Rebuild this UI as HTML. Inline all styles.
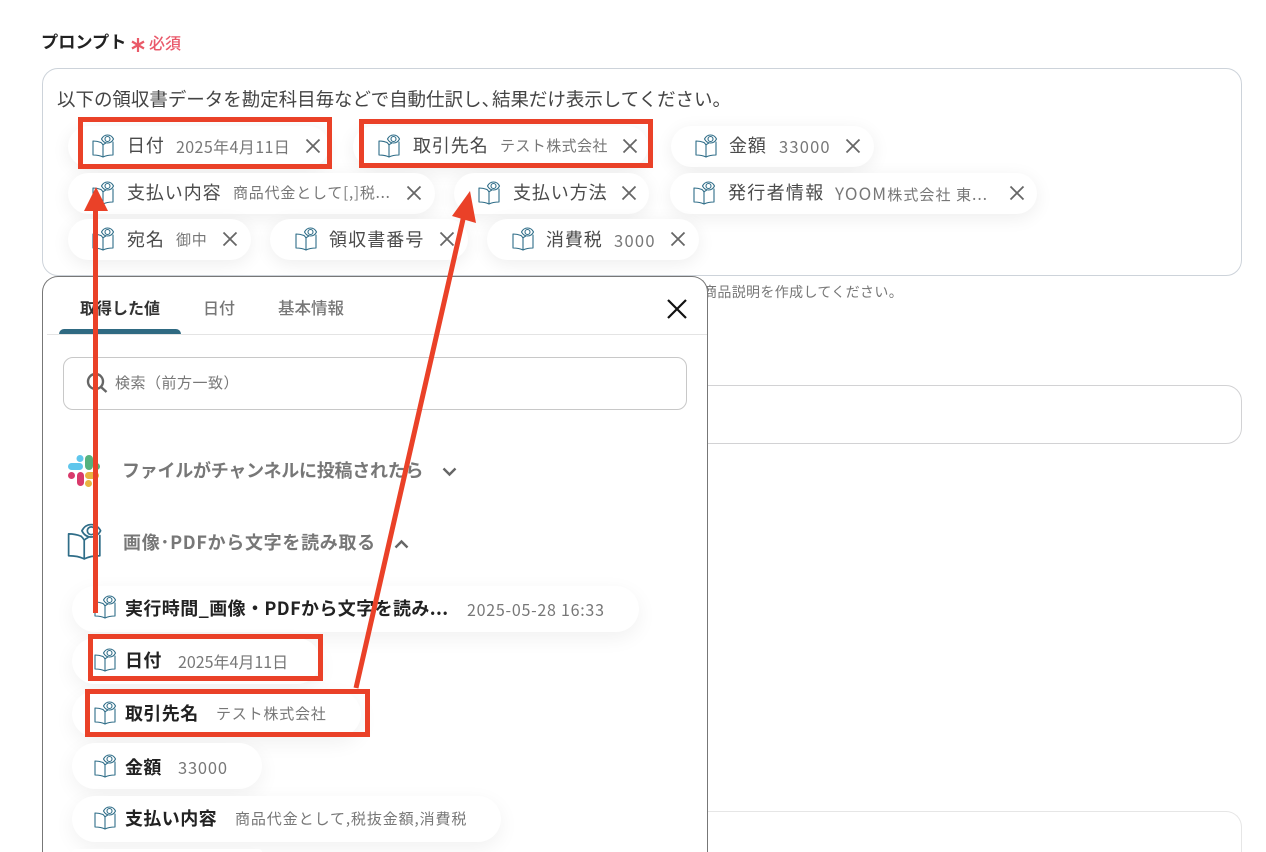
<!DOCTYPE html>
<html lang="ja"><head><meta charset="utf-8"><title>プロンプト</title>
<style>
html,body{margin:0;padding:0;background:#fff;width:1266px;height:852px;overflow:hidden}
#w{width:1266px;height:852px;position:relative;overflow:hidden;font-family:"Noto Sans CJK JP","Liberation Sans",sans-serif;color:#333}
.a{position:absolute;white-space:nowrap}
.t{position:absolute;white-space:nowrap;line-height:24px;height:24px}
.box{position:absolute;box-sizing:border-box;background:#fff}
.chip{position:absolute;height:41px;background:#fff;border-radius:21px;box-shadow:0 4px 18px rgba(0,0,0,.07)}
.chip2{position:absolute;height:46px;left:72px;background:#fff;border-radius:23px;box-shadow:0 6px 20px rgba(0,0,0,.06)}
.l{font-size:18px;color:#4a4a4a;letter-spacing:.9px}
.v{font-size:15px;color:#777;letter-spacing:.8px}
.b{font-size:18px;font-weight:700;color:#222;letter-spacing:.4px}
.i{position:absolute;width:23px;height:25px}
.x{position:absolute;width:16px;height:16px}
.red{position:absolute;box-sizing:border-box;border:5px solid #ea4128}
svg{overflow:visible}
</style></head><body><div id="w">
<svg width="0" height="0" style="position:absolute">
<symbol id="bk" viewBox="0 0 23 25"><g fill="none" stroke="#2f6d88" stroke-width="1.1" stroke-linejoin="round" stroke-linecap="round"><path d="M9 8.500C6.500 7.500 4 7 1 7V21C4.500 21 8 21.500 11 23C14 21.500 17.500 21 21 21V8"/><path d="M11 11V23M11 11C10.500 10 9.800 9.200 9 8.500M11 11C11.800 10.200 12.500 9.800 13.500 9.300"/><path d="M9.500 5C10.800 2.500 13 1 15.500 1C18 1 20.300 2.500 21.500 5C20.300 7.500 18 9 15.500 9C13 9 10.800 7.500 9.500 5Z"/><circle cx="15.500" cy="5" r="2.500"/></g></symbol>
<symbol id="xx" viewBox="0 0 16 16"><path d="M1.500 1.500L14.500 14.500M14.500 1.500L1.500 14.500" stroke="#666" stroke-width="1.800" fill="none"/></symbol>
</svg>

<div class="t" style="left:41px;top:29px;font-size:17.200px;font-weight:700;color:#222">プロンプト</div>
<svg class="a" style="left:131px;top:38px" width="14" height="14" fill="none" stroke="#ea5a68" stroke-width="2.200"><path d="M7 0V14M1 3.500L13 10.500M13 3.500L1 10.500"/></svg>
<div class="t" style="left:149px;top:30px;font-size:16px;font-weight:500;color:#e9596a">必須</div>

<div class="box" style="left:42px;top:68px;width:1200px;height:208px;border:1px solid #cdd3da;border-radius:16px"></div>
<div class="t" style="left:57px;top:87px;font-size:18.500px;color:#444;letter-spacing:-.03px">以下の領収書データを勘定科目毎などで自動仕訳し<span style="letter-spacing:-8px">、</span>結果だけ表示してください。</div>

<div class="chip" style="left:68px;top:126px;width:261px"></div>
<div class="chip" style="left:353px;top:126px;width:295px"></div>
<div class="chip" style="left:671px;top:126px;width:203px"></div>
<div class="chip" style="left:68px;top:173px;width:367px"></div>
<div class="chip" style="left:454px;top:173px;width:195px"></div>
<div class="chip" style="left:670px;top:173px;width:367px"></div>
<div class="chip" style="left:68px;top:219px;width:183px"></div>
<div class="chip" style="left:270px;top:219px;width:198px"></div>
<div class="chip" style="left:487px;top:219px;width:212px"></div>

<svg class="i" style="left:92px;top:134px"><use href="#bk"/></svg><div class="t l" style="left:127px;top:133px">日付</div><div class="t v" style="left:176px;top:134px;font-size:16px;letter-spacing:.4px">2025年4月11日</div><svg class="x" style="left:305px;top:138px"><use href="#xx"/></svg>
<svg class="i" style="left:378px;top:134px"><use href="#bk"/></svg><div class="t l" style="left:413px;top:133px">取引先名</div><div class="t v" style="left:500px;top:134px;letter-spacing:.4px">テスト株式会社</div><svg class="x" style="left:622px;top:138px"><use href="#xx"/></svg>
<svg class="i" style="left:695px;top:134px"><use href="#bk"/></svg><div class="t l" style="left:729px;top:133px">金額</div><div class="t v" style="left:779px;top:134px;font-size:16.500px;letter-spacing:1.200px">33000</div><svg class="x" style="left:845px;top:138px"><use href="#xx"/></svg>

<svg class="i" style="left:92px;top:181px"><use href="#bk"/></svg><div class="t l" style="left:127px;top:180px">支払い内容</div><div class="t v" style="left:233px;top:181px">商品代金として[,]税...</div><svg class="x" style="left:406px;top:185px"><use href="#xx"/></svg>
<svg class="i" style="left:478px;top:181px"><use href="#bk"/></svg><div class="t l" style="left:513px;top:180px">支払い方法</div><svg class="x" style="left:621px;top:185px"><use href="#xx"/></svg>
<svg class="i" style="left:693px;top:181px"><use href="#bk"/></svg><div class="t l" style="left:728px;top:180px;letter-spacing:1.300px">発行者情報</div><div class="t v" style="left:835px;top:181px;letter-spacing:1.100px"><span style="font-size:17px">YOOM</span>株式会社 東...</div><svg class="x" style="left:1009px;top:185px"><use href="#xx"/></svg>

<svg class="i" style="left:92px;top:227px"><use href="#bk"/></svg><div class="t l" style="left:127px;top:227px">宛名</div><div class="t v" style="left:176px;top:228px">御中</div><svg class="x" style="left:222px;top:231px"><use href="#xx"/></svg>
<svg class="i" style="left:295px;top:227px"><use href="#bk"/></svg><div class="t l" style="left:329px;top:227px;letter-spacing:1.100px">領収書番号</div><svg class="x" style="left:439px;top:231px"><use href="#xx"/></svg>
<svg class="i" style="left:512px;top:227px"><use href="#bk"/></svg><div class="t l" style="left:546px;top:227px">消費税</div><div class="t v" style="left:614px;top:228px;font-size:16.500px;letter-spacing:1.300px">3000</div><svg class="x" style="left:670px;top:231px"><use href="#xx"/></svg>

<div class="t" style="left:703px;top:280px;font-size:14px;color:#777;letter-spacing:.35px">商品説明を作成してください。</div>

<div class="box" style="left:42px;top:385px;width:1200px;height:59px;border:1px solid #d2d2d4;border-radius:16px"></div>
<div class="box" style="left:42px;top:811px;width:1200px;height:41px;border:1px solid #e6e6e6;border-bottom:0;border-radius:16px 16px 0 0"></div>

<!-- panel -->
<div class="box" style="left:42px;top:276px;width:666px;height:576px;border:1px solid #777;border-bottom:0;border-radius:16px 16px 0 0"></div>
<div class="a" style="left:47px;top:334px;width:660px;height:1px;background:#e4e4e4"></div>
<div class="a" style="left:59px;top:329px;width:122px;height:5px;background:#2f6a82;border-radius:5px 5px 0 0"></div>
<div class="t" style="left:80px;top:295px;font-size:16px;font-weight:700;color:#333">取得した値</div>
<div class="t" style="left:203px;top:295px;font-size:16px;font-weight:500;color:#777">日付</div>
<div class="t" style="left:278px;top:295px;font-size:16.500px;font-weight:500;color:#777">基本情報</div>
<svg class="a" style="left:667px;top:299px" width="20" height="20"><path d="M1 1L19 19M19 1L1 19" stroke="#111" stroke-width="2.200" fill="none"/></svg>

<div class="box" style="left:63px;top:357px;width:624px;height:53px;border:1px solid #c8c8c8;border-radius:10px"></div>
<svg class="a" style="left:87px;top:373px" width="21" height="20" fill="none" stroke="#666" stroke-width="2.400"><circle cx="8.500" cy="8.500" r="7.500"/><path d="M14 14L19.500 19"/></svg>
<div class="t" style="left:115px;top:371px;font-size:15px;color:#777;letter-spacing:.5px">検索（前方一致）</div>

<!-- slack -->
<svg class="a" style="left:68px;top:454px" width="32" height="32">
<rect x="0" y="9" width="15" height="7" rx="3.500" fill="#5fc6ec"/><circle cx="12" cy="4.500" r="3.500" fill="#5fc6ec"/>
<rect x="17" y="1" width="8" height="15" rx="4" fill="#55b27e"/><circle cx="28.500" cy="12.500" r="3.500" fill="#55b27e"/>
<rect x="9" y="18" width="7" height="14" rx="3.500" fill="#d93a6b"/><circle cx="3.500" cy="21.500" r="3.500" fill="#d93a6b"/>
<rect x="17" y="18" width="14" height="7" rx="3.500" fill="#e8b442"/><circle cx="20.500" cy="29.500" r="3.500" fill="#e8b442"/></svg>
<div class="t" style="left:122px;top:458px;font-size:18px;font-weight:700;color:#777;letter-spacing:-.25px">ファイルがチャンネルに投稿されたら</div>
<svg class="a" style="left:442px;top:467px" width="15" height="10" fill="none" stroke="#666" stroke-width="2.400"><path d="M1.500 1.500L7.500 7.500L13.500 1.500"/></svg>

<svg class="a" style="left:67px;top:523px" width="36" height="39" viewBox="0 0 23 25"><use href="#bk"/></svg>
<div class="t" style="left:123px;top:530px;font-size:18px;font-weight:700;color:#777;letter-spacing:.7px">画像･PDFから文字を読み取る</div>
<svg class="a" style="left:394px;top:539px" width="15" height="10" fill="none" stroke="#666" stroke-width="2.400"><path d="M1.500 8.500L7.500 2.500L13.500 8.500"/></svg>

<!-- list -->
<div class="chip2" style="top:586px;width:567px"></div>
<div class="chip2" style="top:638px;width:248px"></div>
<div class="chip2" style="top:691px;width:289px"></div>
<div class="chip2" style="top:743px;width:190px"></div>
<div class="chip2" style="top:796px;width:429px"></div>
<div class="chip2" style="top:849px;width:190px;height:3px;border-radius:23px 23px 0 0"></div>

<svg class="i" style="left:94px;top:595px"><use href="#bk"/></svg><div class="t b" style="left:125px;top:596px">実行時間_画像・PDFから文字を読み...</div><div class="t v" style="left:467px;top:597px;font-size:16px;letter-spacing:.75px">2025-05-28 16:33</div>
<svg class="i" style="left:94px;top:648px"><use href="#bk"/></svg><div class="t b" style="left:125px;top:648px">日付</div><div class="t v" style="left:178px;top:649px;font-size:16px;letter-spacing:0">2025年4月11日</div>
<svg class="i" style="left:94px;top:701px"><use href="#bk"/></svg><div class="t b" style="left:125px;top:701px">取引先名</div><div class="t v" style="left:216px;top:702px">テスト株式会社</div>
<svg class="i" style="left:94px;top:754px"><use href="#bk"/></svg><div class="t b" style="left:125px;top:755px">金額</div><div class="t v" style="left:178px;top:755px;font-size:16.500px;letter-spacing:.8px">33000</div>
<svg class="i" style="left:94px;top:806px"><use href="#bk"/></svg><div class="t b" style="left:125px;top:806px">支払い内容</div><div class="t v" style="left:235px;top:807px;letter-spacing:.9px">商品代金として,税抜金額,消費税</div>

<!-- annotations -->
<div class="red" style="left:78px;top:117px;width:254px;height:52px"></div>
<div class="red" style="left:359px;top:119px;width:294px;height:49px"></div>
<div class="red" style="left:88px;top:634px;width:235px;height:47px"></div>
<div class="red" style="left:85px;top:689px;width:285px;height:48px"></div>
<svg class="a" style="left:0;top:0" width="1266" height="852">
<rect x="93" y="205" width="5" height="408" fill="#ea4128"/>
<polygon points="96,187 108,211 84,211" fill="#ea4128"/>
<line x1="356" y1="688" x2="464" y2="215" stroke="#ea4128" stroke-width="5"/>
<polygon points="470,191 476,223 452,216" fill="#ea4128"/>
</svg>
</div></body></html>
